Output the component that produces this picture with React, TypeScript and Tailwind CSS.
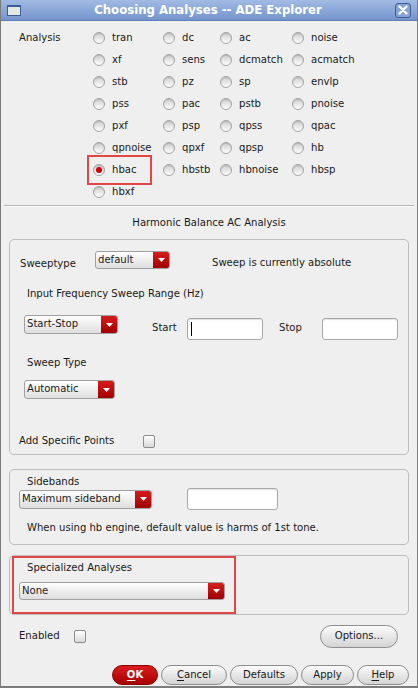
import type { ReactNode } from 'react'

const font = "font-['DejaVu_Sans_Condensed','DejaVu_Sans',sans-serif] font-stretch-condensed"

const analyses = [
  ['tran', 'dc', 'ac', 'noise'],
  ['xf', 'sens', 'dcmatch', 'acmatch'],
  ['stb', 'pz', 'sp', 'envlp'],
  ['pss', 'pac', 'pstb', 'pnoise'],
  ['pxf', 'psp', 'qpss', 'qpac'],
  ['qpnoise', 'qpxf', 'qpsp', 'hb'],
  ['hbac', 'hbstb', 'hbnoise', 'hbsp'],
  ['hbxf'],
]

function Radio({ label, checked }: { label: string; checked?: boolean }) {
  return (
    <div className="relative flex h-[22px] items-center gap-[7px]">
      <span className="flex h-[12px] w-[12px] items-center justify-center rounded-full border border-[#a4a4a4] bg-linear-to-b from-[#cdcdcd] to-white shadow-[inset_0_1px_1px_rgba(0,0,0,0.12)]">
        {checked ? <span className="h-[6px] w-[6px] rounded-full bg-[#d00000]" /> : null}
      </span>
      <span className="leading-[14px]">{label}</span>
      {checked ? (
        <span className="absolute top-[-4px] left-[-6px] h-[30px] w-[65px] border-2 border-[#e04848]" />
      ) : null}
    </div>
  )
}

function Combo({ value, className }: { value: string; className: string }) {
  return (
    <div
      className={`flex overflow-hidden rounded-[3px] border border-[#a0a0a0] bg-linear-to-b from-white to-[#dedede] ${className}`}
    >
      <span className="flex-1 pl-[2px] leading-[14px] pt-[1px]">{value}</span>
      <span className="flex w-[16px] items-center justify-center bg-linear-to-b from-[#d81c1c] to-[#a00000]">
        <svg width="7" height="4" viewBox="0 0 7 4">
          <path d="M0 0h7L3.5 4z" fill="#fff" />
        </svg>
      </span>
    </div>
  )
}

function Field({ className, cursor }: { className: string; cursor?: boolean }) {
  return (
    <div
      className={`flex items-center rounded-[3px] border border-[#a8a8a8] bg-white shadow-[inset_0_1px_1px_rgba(0,0,0,0.12)] ${className}`}
    >
      {cursor ? <span className="ml-[3px] h-[14px] w-px bg-black" /> : null}
    </div>
  )
}

function Check() {
  return (
    <span className="h-[13px] w-[12px] rounded-[2px] border border-[#8c8c8c] bg-linear-to-b from-white to-[#d8d8d8]" />
  )
}

function Btn({ children, className }: { children: ReactNode; className: string }) {
  return (
    <div
      className={`flex items-center justify-center rounded-full border border-[#8e8e8e] bg-linear-to-b from-[#fbfbfb] to-[#d4d4d4] leading-[14px] ${className}`}
    >
      {children}
    </div>
  )
}

export default function App() {
  return (
    <div
      className={`flex h-[688px] w-[418px] flex-col border-x border-b-2 border-[#7c7c7c] bg-[#efefef] text-[11.2px] text-[#1a1a1a] ${font}`}
    >
      {/* title bar */}
      <div className="flex h-[21px] shrink-0 items-center border-b border-[#5d7fb8] bg-linear-to-b from-[#a2bbe4] to-[#7594cb] px-[6px]">
        <div className="h-[11px] w-[14px] border-t-2 border-x border-b border-[#3c5d96] bg-[#e4e6e2]" />
        <div className="flex-1 text-center text-[13px] leading-[16px] font-bold text-white">
          Choosing Analyses -- ADE Explorer
        </div>
        <div className="flex h-[15px] w-[16px] items-center justify-center rounded-[3px] border border-[#3f5f96] bg-[#86a3d4]">
          <svg width="10" height="10" viewBox="0 0 10 10">
            <path d="M1.5 1.5l7 7M8.5 1.5l-7 7" stroke="#fff" strokeWidth="2.4" strokeLinecap="round" />
          </svg>
        </div>
      </div>

      {/* analysis radios */}
      <div className="flex pt-[6px]">
        <div className="w-[92px] pl-[18px] pt-[4px] leading-[14px]">Analysis</div>
        <div className="grid grid-cols-[70px_57px_72px_80px]">
          {analyses.flat().map((a) => (
            <Radio key={a} label={a} checked={a === 'hbac'} />
          ))}
        </div>
      </div>

      <div className="mx-[3px] mt-[2px] h-[2px] border-t border-b border-t-[#b4b4b4] border-b-white" />

      <div className="mt-[9px] text-center leading-[14px]">Harmonic Balance AC Analysis</div>

      {/* group 1 */}
      <div className="mx-[8px] mt-[9px] flex h-[216px] flex-col rounded-[5px] border border-[#bdbdbd]">
        <div className="mt-[11px] flex h-[20px] items-start">
          <span className="mt-[6px] ml-[10px] w-[75px] leading-[14px]">Sweeptype</span>
          <Combo value="default" className="h-[18px] w-[75px]" />
          <span className="mt-[5px] ml-[42px] leading-[14px]">Sweep is currently absolute</span>
        </div>
        <div className="mt-[16px] ml-[17px] leading-[14px]">Input Frequency Sweep Range (Hz)</div>
        <div className="mt-[14px] flex h-[25px] items-start">
          <Combo value="Start-Stop" className="ml-[14px] h-[19px] w-[94px]" />
          <span className="mt-[6px] ml-[34px] w-[35px] leading-[14px]">Start</span>
          <Field className="mt-[3px] h-[22px] w-[76px]" cursor />
          <span className="mt-[6px] ml-[16px] w-[43px] leading-[14px]">Stop</span>
          <Field className="mt-[3px] h-[22px] w-[76px]" />
        </div>
        <div className="mt-[16px] ml-[17px] leading-[14px]">Sweep Type</div>
        <Combo value="Automatic" className="mt-[10px] ml-[14px] h-[19px] w-[91px]" />
        <div className="mt-[35px] flex items-center">
          <span className="ml-[9px] w-[124px] leading-[14px]">Add Specific Points</span>
          <Check />
        </div>
      </div>

      {/* group 2 */}
      <div className="mx-[8px] mt-[14px] flex h-[76px] flex-col rounded-[5px] border border-[#bdbdbd]">
        <div className="mt-[6px] ml-[17px] h-[12px] leading-[12px]">Sidebands</div>
        <div className="flex h-[22px] items-center">
          <Combo value="Maximum sideband" className="ml-[9px] h-[19px] w-[133px]" />
          <Field className="ml-[35px] h-[22px] w-[91px]" />
        </div>
        <div className="mt-[11px] ml-[17px] leading-[14px]">
          When using hb engine, default value is harms of 1st tone.
        </div>
      </div>

      {/* group 3 */}
      <div className="relative mx-[8px] mt-[10px] flex h-[60px] flex-col rounded-[5px] border border-[#bdbdbd]">
        <div className="mt-[5px] ml-[17px] leading-[14px]">Specialized Analyses</div>
        <Combo value="None" className="mt-[7px] ml-[9px] h-[18px] w-[206px]" />
        <span className="absolute top-0 left-[2px] h-[58px] w-[224px] border-2 border-[#e04848]" />
      </div>

      <div className="mt-[9px] flex h-[24px] items-center">
        <span className="ml-[18px] w-[55px] leading-[14px]">Enabled</span>
        <Check />
        <Btn className="mr-[19px] ml-auto h-[23px] w-[78px]">Options...</Btn>
      </div>

      <div className="mt-[17px] flex h-[20px] justify-end gap-[3px] pr-[8px]">
        <div className="flex w-[46px] items-center justify-center rounded-full border border-[#8a0000] bg-linear-to-b from-[#d81c1c] to-[#a80000] leading-[14px] font-bold text-white">
          <span className="underline underline-offset-2">O</span>K
        </div>
        <Btn className="w-[66px]">
          <span className="underline underline-offset-2">C</span>ancel
        </Btn>
        <Btn className="w-[68px]">Defaults</Btn>
        <Btn className="w-[53px]">Apply</Btn>
        <Btn className="w-[52px]">
          <span className="underline underline-offset-2">H</span>elp
        </Btn>
      </div>
    </div>
  )
}
